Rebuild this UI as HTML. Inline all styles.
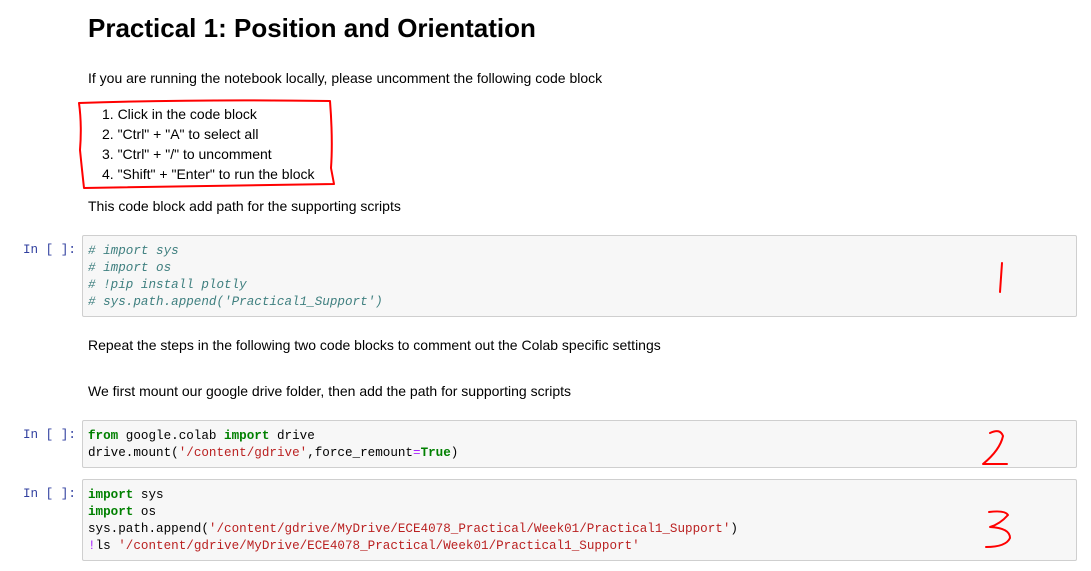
<!DOCTYPE html>
<html><head><meta charset="utf-8"><style>
body{margin:0;width:1091px;height:571px;background:#fff;position:relative;overflow:hidden;font-family:"Liberation Sans",Arial,sans-serif;color:#000}
.a{position:absolute;white-space:pre}
h1{position:absolute;left:88px;top:13px;margin:0;font-size:26px;font-weight:bold}
.p{font-size:14px}
.box{position:absolute;left:82px;width:993px;background:#f7f7f7;border:1px solid #cfcfcf;border-radius:2px}
.code{position:absolute;left:5px;top:7px;font-family:"Liberation Mono",monospace;font-size:12.6px;line-height:17px;white-space:pre;color:#000}
.pr{position:absolute;left:23px;font-family:"Liberation Mono",monospace;font-size:12.6px;color:#303f9f}
.c{color:#408080;font-style:italic}.k{color:#008000;font-weight:bold}.s{color:#ba2121}.o{color:#aa22ff}
</style></head><body>
<h1>Practical 1: Position and Orientation</h1>
<div class="a p" style="left:88px;top:70px">If you are running the notebook locally, please uncomment the following code block</div>
<div class="a p" style="left:102px;top:104px;line-height:20px">1. Click in the code block
2. "Ctrl" + "A" to select all
3. "Ctrl" + "/" to uncomment
4. "Shift" + "Enter" to run the block</div>
<div class="a p" style="left:88px;top:198px">This code block add path for the supporting scripts</div>
<div class="pr" style="top:243px">In [ ]:</div>
<div class="box" style="top:235px;height:80px"><div class="code"><span class="c"># import sys
# import os
# !pip install plotly
# sys.path.append('Practical1_Support')</span></div></div>
<div class="a p" style="left:88px;top:337px">Repeat the steps in the following two code blocks to comment out the Colab specific settings</div>
<div class="a p" style="left:88px;top:383px">We first mount our google drive folder, then add the path for supporting scripts</div>
<div class="pr" style="top:428px">In [ ]:</div>
<div class="box" style="top:420px;height:46px"><div class="code"><span class="k">from</span> google.colab <span class="k">import</span> drive
drive.mount(<span class="s">'/content/gdrive'</span>,force_remount<span class="o">=</span><span class="k">True</span>)</div></div>
<div class="pr" style="top:487px">In [ ]:</div>
<div class="box" style="top:479px;height:80px"><div class="code"><span class="k">import</span> sys
<span class="k">import</span> os
sys.path.append(<span class="s">'/content/gdrive/MyDrive/ECE4078_Practical/Week01/Practical1_Support'</span>)
<span class="o">!</span>ls <span class="s">'/content/gdrive/MyDrive/ECE4078_Practical/Week01/Practical1_Support'</span></div></div>
<svg class="a" style="left:0;top:0" width="1091" height="571" fill="none" stroke="#f00" stroke-width="2" stroke-linecap="round" stroke-linejoin="round">
<path d="M79 103 Q200 99 330 101 Q333 140 331 168 L334 184 Q200 186 84 188 Q82 170 80 150 Q82 125 79 103"/>
<path d="M1002 263 Q1001 278 1000 292"/>
<path d="M990 433 Q1000 428 1003 436 Q1000 450 983 464 L1007 464"/>
<path d="M989 512 Q1005 510 1008 515 Q1000 524 990 527 Q1010 528 1010 538 Q1006 547 986 547"/>
</svg>
</body></html>
